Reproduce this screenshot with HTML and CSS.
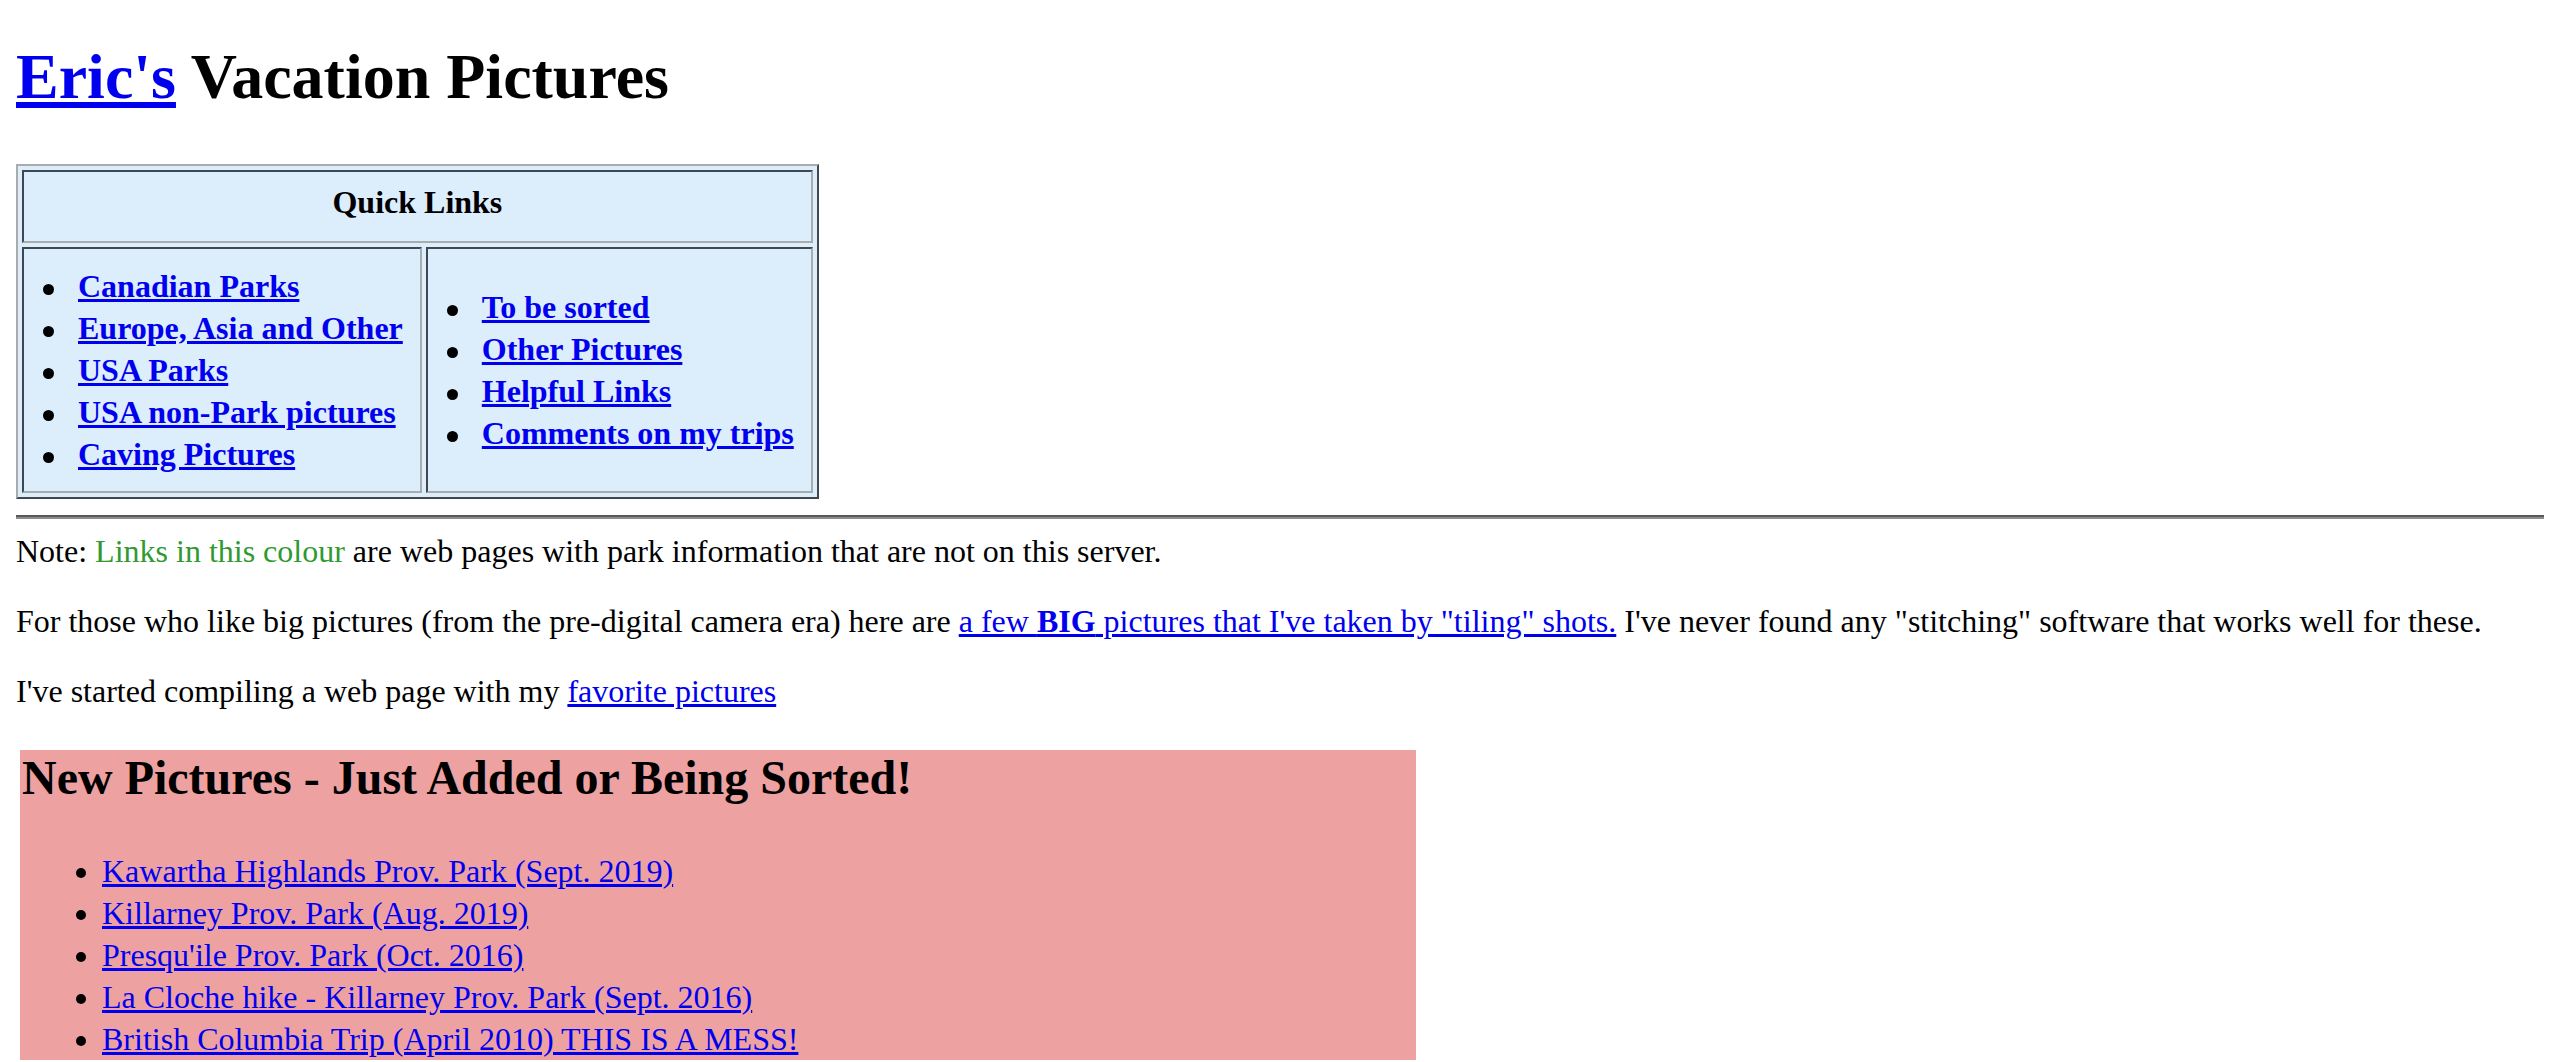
FILE: index.html
```html
<!DOCTYPE html>
<html lang="en">
<head>
<meta charset="utf-8">
<title>Eric's Vacation Pictures</title>
<link rel="stylesheet" href="styles.css">
</head>
<body class="page">
<h1 class="title"><a href="#" class="link">Eric's</a> Vacation Pictures</h1>
<table class="quick">
  <tr>
    <th colspan="2" class="quick-head">Quick Links</th>
  </tr>
  <tr>
    <td class="quick-cell">
      <ul class="quick-list">
        <li class="quick-item"><a href="#" class="link">Canadian Parks</a></li>
        <li class="quick-item"><a href="#" class="link">Europe, Asia and Other</a></li>
        <li class="quick-item"><a href="#" class="link">USA Parks</a></li>
        <li class="quick-item"><a href="#" class="link">USA non-Park pictures</a></li>
        <li class="quick-item"><a href="#" class="link">Caving Pictures</a></li>
      </ul>
    </td>
    <td class="quick-cell">
      <ul class="quick-list">
        <li class="quick-item"><a href="#" class="link">To be sorted</a></li>
        <li class="quick-item"><a href="#" class="link">Other Pictures</a></li>
        <li class="quick-item"><a href="#" class="link">Helpful Links</a></li>
        <li class="quick-item"><a href="#" class="link">Comments on my trips</a></li>
      </ul>
    </td>
  </tr>
</table>
<hr class="rule">
<div class="note">Note: <span class="ext">Links in this colour</span> are web pages with park information that are not on this server.</div>
<p class="para">For those who like big pictures (from the pre-digital camera era) here are <a href="#" class="link">a few <b>BIG</b> pictures that I've taken by "tiling" shots.</a> I've never found any "stitching" software that works well for these.</p>
<p class="para">I've started compiling a web page with my <a href="#" class="link">favorite pictures</a></p>
<div class="news-wrap">
  <div class="news">
    <h2 class="news-title">New Pictures - Just Added or Being Sorted!</h2>
    <ul class="news-list">
      <li><a href="#" class="link">Kawartha Highlands Prov. Park (Sept. 2019)</a></li>
      <li><a href="#" class="link">Killarney Prov. Park (Aug. 2019)</a></li>
      <li><a href="#" class="link">Presqu'ile Prov. Park (Oct. 2016)</a></li>
      <li><a href="#" class="link">La Cloche hike - Killarney Prov. Park (Sept. 2016)</a></li>
      <li><a href="#" class="link">British Columbia Trip (April 2010) THIS IS A MESS!</a></li>
    </ul>
  </div>
</div>
</body>
</html>
```
FILE: styles.css
```css
html {
  background: #ffffff;
}

.page {
  margin: 16px;
  font-family: "Liberation Serif", "Times New Roman", serif;
  font-size: 32px;
  line-height: 38px;
  color: #000000;
  background: #ffffff;
}

.link {
  color: #0000ee;
  text-decoration: underline;
}

.title {
  font-size: 64px;
  line-height: 74px;
  font-weight: bold;
  margin: 24px 0 50px;
}

.quick {
  border-collapse: separate;
  border-spacing: 4px;
  border: 2px solid;
  border-color: #a9abad #3f4852 #3f4852 #a9abad;
  background: #dcedfc;
}

.quick-head {
  padding: 9px 16px 18px;
  line-height: 42px;
  font-weight: bold;
  text-align: center;
  border: 2px solid;
  border-color: #3f4852 #a9abad #a9abad #3f4852;
}

.quick-cell {
  padding: 16px 17px 16px 16px;
  vertical-align: middle;
  text-align: left;
  border: 2px solid;
  border-color: #3f4852 #a9abad #a9abad #3f4852;
}

.quick-list {
  margin: 0;
  padding-left: 38px;
  font-weight: bold;
  line-height: 42px;
  list-style: none;
}

.quick-item::before {
  content: "";
  display: inline-block;
  width: 11px;
  height: 11px;
  margin-left: -35px;
  margin-right: 24px;
  border-radius: 50%;
  background: #000000;
  vertical-align: middle;
}

.rule {
  margin: 16px 0 13px;
  height: 0;
  border: 0;
  border-top: 2px solid #5a5a5a;
  border-bottom: 2px solid #8c8c8c;
}

.note {
  margin: 0;
}

.ext {
  color: #2f9a2f;
}

.para {
  margin: 32px 0;
}

.news-wrap {
  margin-top: 36px;
  padding: 4px;
}

.news {
  width: 1392px;
  padding: 0 2px;
  background: #eda1a1;
}

.news-title {
  font-size: 48px;
  line-height: 55px;
  font-weight: bold;
  margin: 0 0 45px;
}

.news-list {
  margin: 32px 0;
  padding-left: 80px;
  line-height: 42px;
}
```
